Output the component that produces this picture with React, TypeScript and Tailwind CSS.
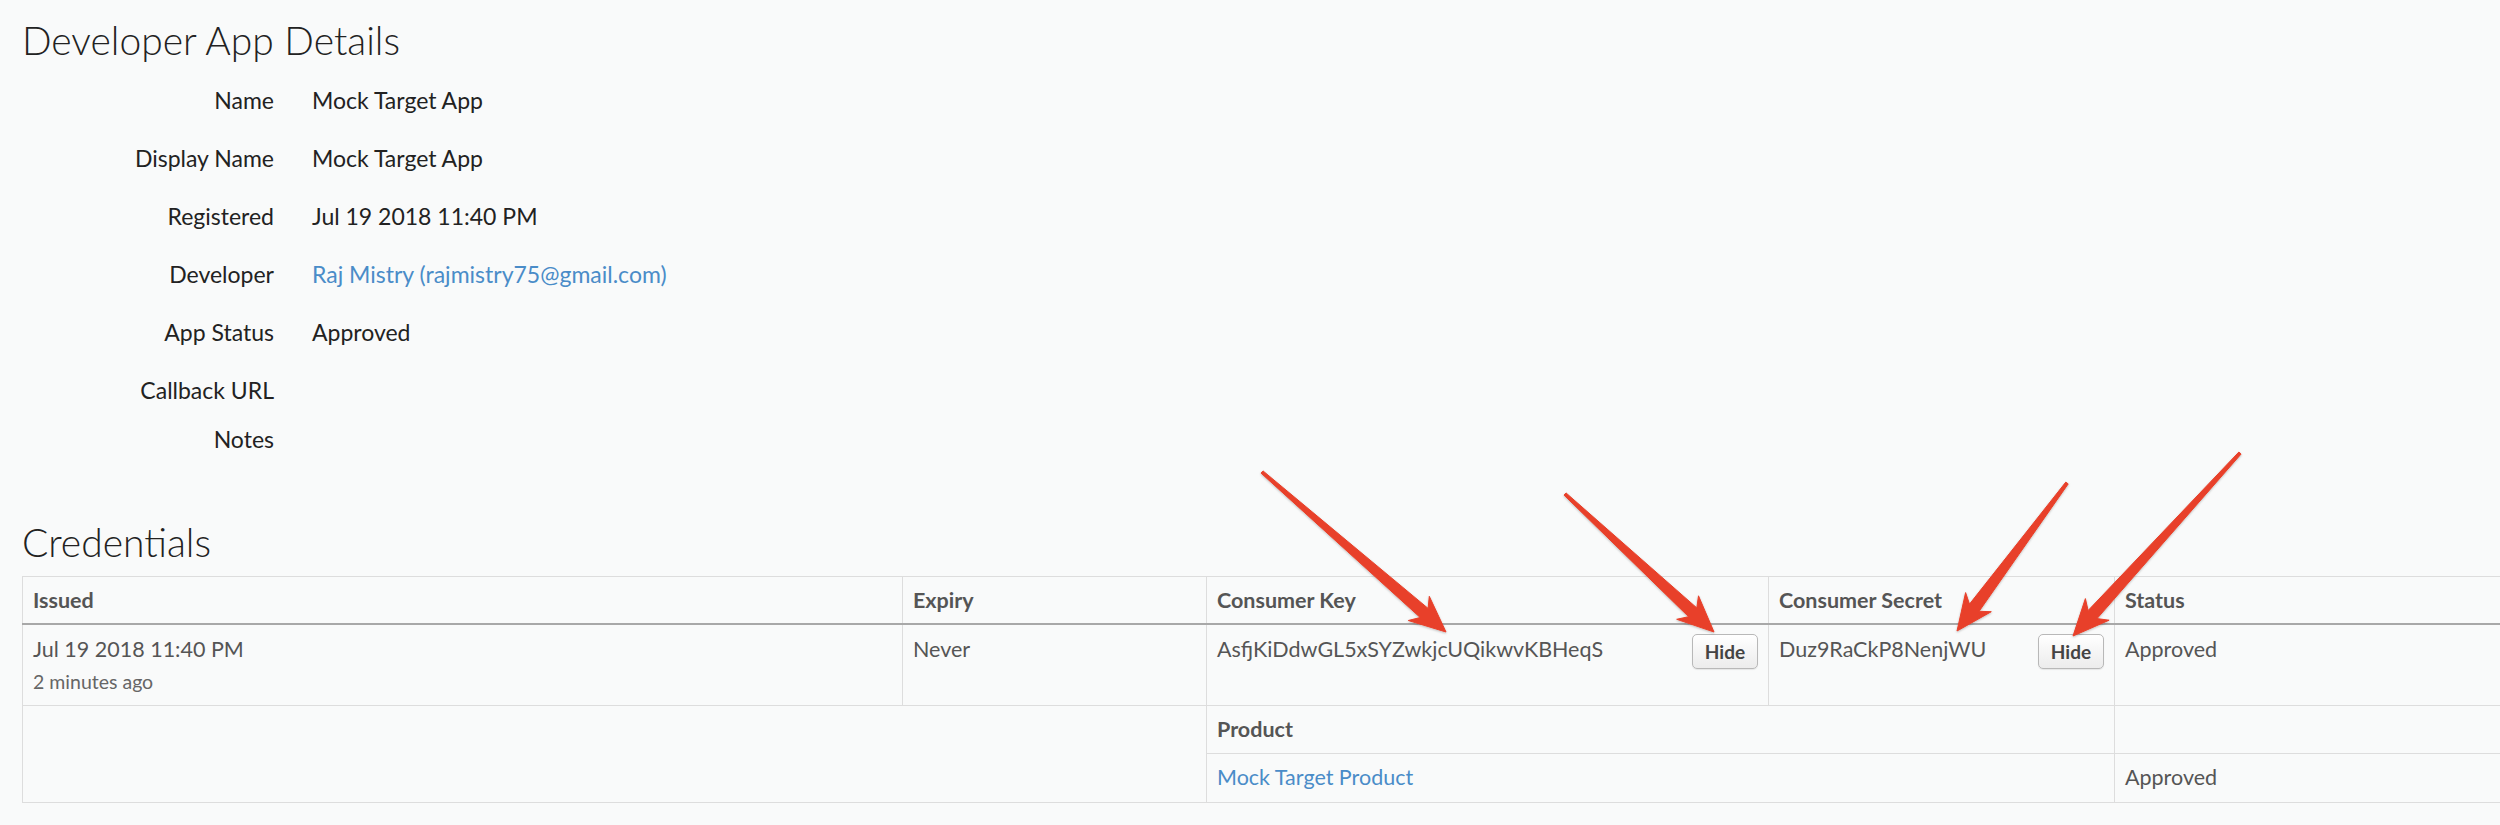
import React from 'react';

type Arrow = { from: [number, number]; to: [number, number] };

const arrows: Arrow[] = [
  { from: [1262, 472], to: [1446, 632] },
  { from: [1565, 494], to: [1714, 632] },
  { from: [2067, 483], to: [1957, 631] },
  { from: [2240, 453], to: [2073, 636] },
];

function arrowPoints({ from, to }: Arrow) {
  const [tx, ty] = from;
  const [hx, hy] = to;
  const len = Math.hypot(hx - tx, hy - ty);
  const ux = (hx - tx) / len;
  const uy = (hy - ty) / len;
  const px = -uy;
  const py = ux;
  const headLen = 36;
  const bx = hx - ux * headLen;
  const by = hy - uy * headLen;
  const nx = bx + ux * 7;
  const ny = by + uy * 7;
  const pts: [number, number][] = [
    [tx + px * 1.5, ty + py * 1.5],
    [nx + px * 6, ny + py * 6],
    [bx + px * 16, by + py * 16],
    [hx, hy],
    [bx - px * 16, by - py * 16],
    [nx - px * 6, ny - py * 6],
    [tx - px * 1.5, ty - py * 1.5],
  ];
  return pts.map(([x, y]) => `${x.toFixed(1)},${y.toFixed(1)}`).join(' ');
}

const details: { label: string; value?: string; link?: boolean }[] = [
  { label: 'Name', value: 'Mock Target App' },
  { label: 'Display Name', value: 'Mock Target App' },
  { label: 'Registered', value: 'Jul 19 2018 11:40 PM' },
  { label: 'Developer', value: 'Raj Mistry (rajmistry75@gmail.com)', link: true },
  { label: 'App Status', value: 'Approved' },
  { label: 'Callback URL' },
  { label: 'Notes', value: '' },
];

function HideButton() {
  return (
    <button
      type="button"
      className="float-right h-[35px] w-[66px] rounded-[5px] border border-[#b8b8b8] bg-gradient-to-b from-white to-[#ececec] text-[19px] font-bold leading-[33px] text-[#444] shadow-[0_1px_1px_rgba(0,0,0,0.08)]"
    >
      Hide
    </button>
  );
}

export default function App() {
  const th = 'border border-[#ddd] border-b-2 border-b-[#a8a8a8] px-[10px] pt-[8px] pb-[8px] text-left align-top font-bold';
  const td = 'border border-[#ddd] px-[10px] align-top';

  return (
    <div className="relative h-[825px] w-full overflow-hidden bg-[#f9fafa] font-['Lato',sans-serif] text-[#222]">
      <div className="pl-[22px] pt-[20px]">
        <h1 className="text-[39px] font-light leading-[40px] text-[#222]">Developer App Details</h1>

        <div className="mt-[25px] flex flex-col text-[23px] leading-[30px]">
          {details.map((d) => (
            <div key={d.label} className={`flex ${d.value !== undefined ? 'h-[58px]' : 'h-[49px]'}`}>
              <div className="w-[252px] shrink-0 text-right">{d.label}</div>
              <div className="pl-[38px]">
                {d.link ? <a className="text-[#4a8cc8]">{d.value}</a> : d.value}
              </div>
            </div>
          ))}
        </div>

        <h2 className="mt-[40px] text-[39px] font-light leading-[40px] text-[#222]">Credentials</h2>

        <table className="mt-[14px] w-[2480px] table-fixed border-collapse text-[21.5px] leading-[30px] text-[#555]">
          <colgroup>
            <col className="w-[880px]" />
            <col className="w-[304px]" />
            <col className="w-[562px]" />
            <col className="w-[346px]" />
            <col />
          </colgroup>
          <thead>
            <tr>
              <th className={th}>Issued</th>
              <th className={th}>Expiry</th>
              <th className={th}>Consumer Key</th>
              <th className={th}>Consumer Secret</th>
              <th className={th}>Status</th>
            </tr>
          </thead>
          <tbody>
            <tr className="h-[81px]">
              <td className={`${td} pt-[9px] pb-[10px]`}>
                <div>Jul 19 2018 11:40 PM</div>
                <div className="mt-[5px] text-[19.5px] leading-[26px] text-[#666]">2 minutes ago</div>
              </td>
              <td className={`${td} pt-[9px]`}>Never</td>
              <td className={`${td} pt-[9px]`}>
                <HideButton />
                AsfjKiDdwGL5xSYZwkjcUQikwvKBHeqS
              </td>
              <td className={`${td} pt-[9px]`}>
                <HideButton />
                Duz9RaCkP8NenjWU
              </td>
              <td className={`${td} pt-[9px]`}>Approved</td>
            </tr>
            <tr className="h-[48px]">
              <td className={td} colSpan={2} rowSpan={2}></td>
              <td className={`${td} py-[8px] font-bold`} colSpan={2}>
                Product
              </td>
              <td className={td}></td>
            </tr>
            <tr className="h-[49px]">
              <td className={`${td} py-[8px]`} colSpan={2}>
                <a className="text-[#4a8cc8]">Mock Target Product</a>
              </td>
              <td className={`${td} py-[8px]`}>Approved</td>
            </tr>
          </tbody>
        </table>
      </div>

      <svg
        className="pointer-events-none absolute left-0 top-0"
        width="2500"
        height="825"
        viewBox="0 0 2500 825"
      >
        <defs>
          <filter id="arrowShadow" x="-10%" y="-10%" width="120%" height="120%">
            <feDropShadow dx="0" dy="1" stdDeviation="1" floodColor="#000" floodOpacity="0.25" />
          </filter>
        </defs>
        {arrows.map((a, i) => (
          <polygon
            key={i}
            points={arrowPoints(a)}
            fill="#e8402a"
            stroke="#e8402a"
            strokeWidth="1"
            strokeLinejoin="round"
            filter="url(#arrowShadow)"
          />
        ))}
      </svg>
    </div>
  );
}
